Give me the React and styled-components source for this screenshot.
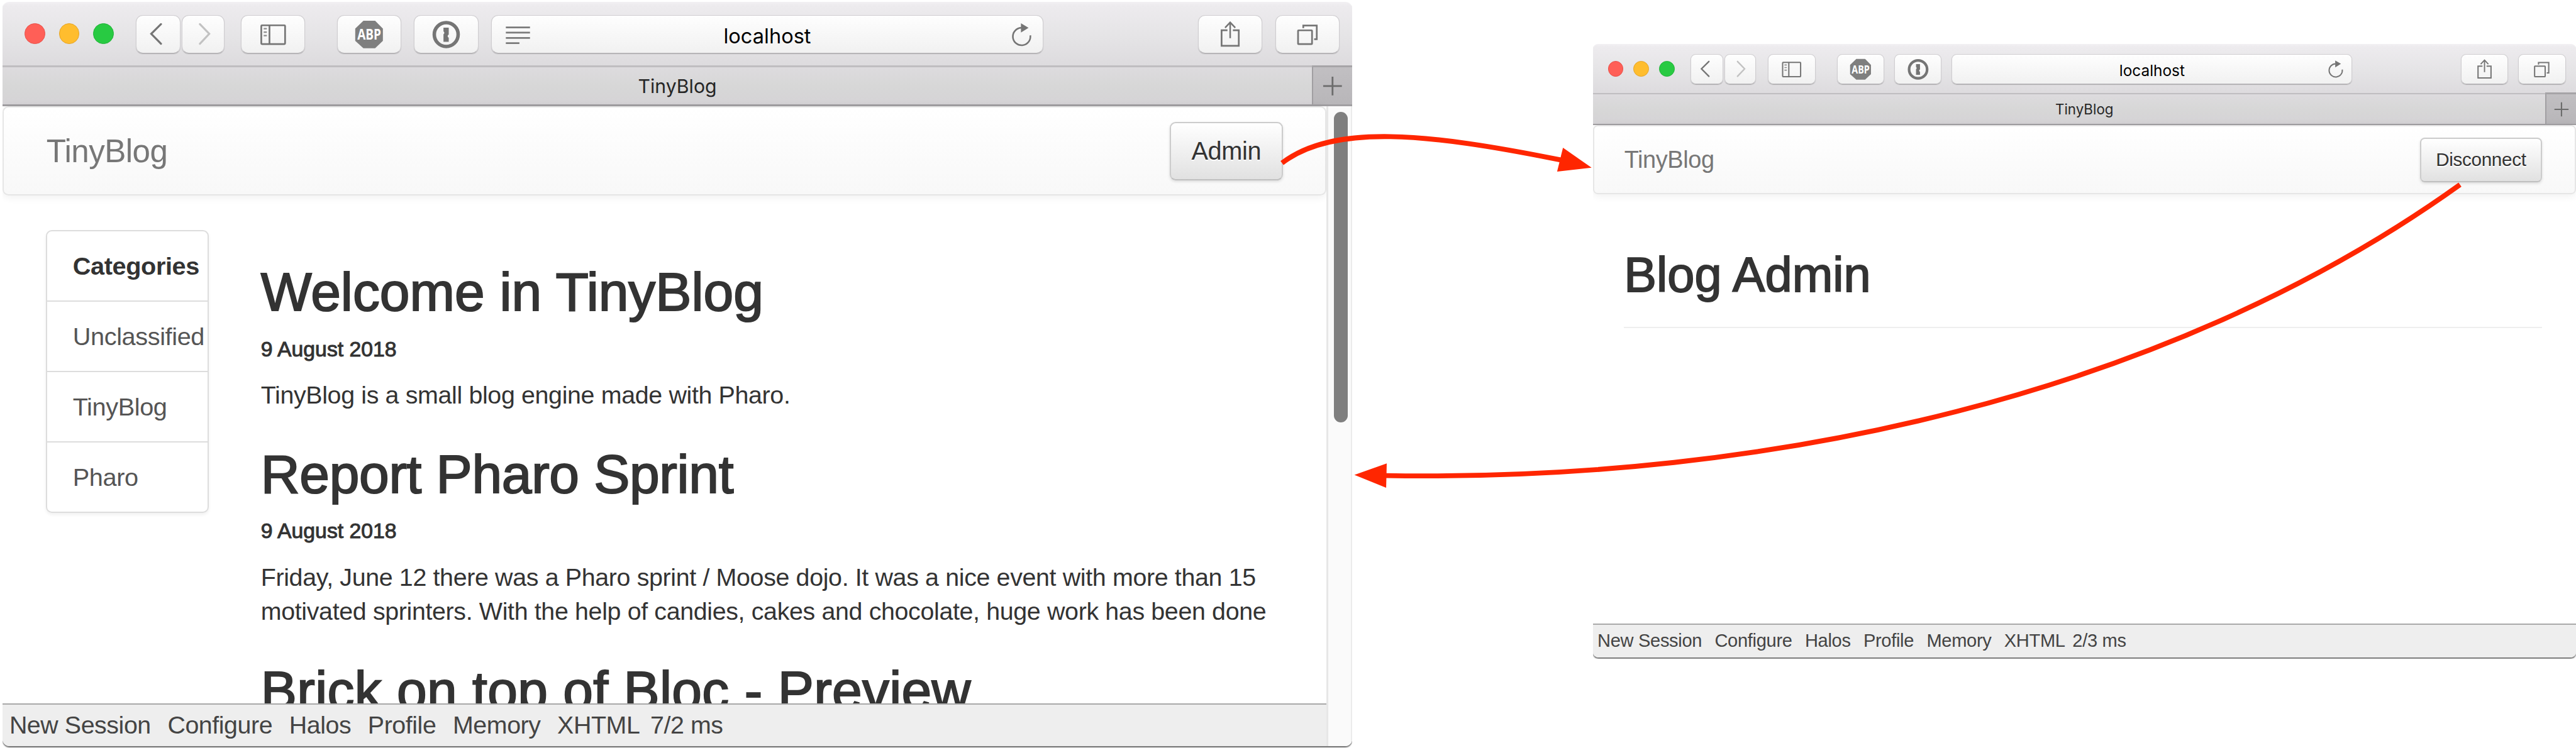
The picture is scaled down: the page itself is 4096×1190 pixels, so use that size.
import React from "react";
import styled, { createGlobalStyle, ThemeProvider } from "styled-components";

/* All measures are design units; u() turns them into screen pixels. */
const SCALE = 4096 / 4404;
const u = (n) => `${(n * SCALE).toFixed(2)}px`;
const t = (key) => ({ theme }) => u(theme[key]);

const sans = `"Liberation Sans", Arial, sans-serif`;
const chromeFont = `Inter, "Liberation Sans", sans-serif`;

const mainTheme = {
  width: 2308, frameHeight: 1276, windowHeight: 1273, radius: 12,
  toolbarHeight: 109, toolbarPadTop: 22.3, toolbarPadLeft: 38, toolbarPadRight: 22,
  light: 35, lightGap: 23.75, lightsEnd: 37.5,
  buttonHeight: 66.4, buttonWidth: 110, backWidth: 76.5, forwardWidth: 73,
  navEnd: 28, sidebarEnd: 54.5, buttonGap: 22, urlWidth: 943.7,
  icon: 1, urlFont: 35, urlShift: 5,
  tabBarHeight: 70, tabFont: 32.5, plusWidth: 69,
  navbarHeight: 152, navbarPadLeft: 73.2, navbarPadRight: 73, brandFont: 53.9,
  actionWidth: 193, actionHeight: 99.5, actionFont: 41.9, navRadius: 10,
  footerHeight: 73, footerFont: 41.5, footerGap: 28.6, footerPadLeft: 12, timeGap: 18,
};

const adminTheme = {
  width: 1681, frameHeight: 1051, windowHeight: 1048.8, radius: 9,
  toolbarHeight: 84, toolbarPadTop: 16.8, toolbarPadLeft: 25.9, toolbarPadRight: 17.6,
  light: 26.7, lightGap: 16.9, lightsEnd: 27.6,
  buttonHeight: 51.6, buttonWidth: 80.9, backWidth: 55.7, forwardWidth: 53.4,
  navEnd: 21.3, sidebarEnd: 36.7, buttonGap: 17.3, urlWidth: 685,
  icon: 0.755, urlFont: 26.2, urlShift: 4,
  tabBarHeight: 54.5, tabFont: 24, plusWidth: 52.5,
  navbarHeight: 118.3, navbarPadLeft: 51.8, navbarPadRight: 55.6, brandFont: 40,
  actionWidth: 209.4, actionHeight: 76.4, actionFont: 31.2, navRadius: 8,
  footerHeight: 57.3, footerFont: 30.65, footerGap: 21.8, footerPadLeft: 8, timeGap: 12.5,
};

const GlobalStyle = createGlobalStyle`
  *, *::before, *::after { box-sizing: border-box; }
  body { margin: 0; background: #fff; }
  h1, h2, p, ul { margin: 0; padding: 0; }
`;

const Stage = styled.main`
  position: relative;
  display: flex;
  align-items: flex-start;
  gap: ${u(411)};
  width: 4096px;
  height: 1190px;
  padding: ${u(3)} 0 0 ${u(4)};
  overflow: hidden;
  background: #fff;
  font-family: ${sans};
  white-space: nowrap;
`;

const Frame = styled.section`
  flex: none;
  width: ${t("width")};
  height: ${t("frameHeight")};
  margin-top: ${({ $drop }) => u($drop || 0)};
  overflow: hidden;
`;

const WindowBox = styled.div`
  display: flex;
  flex-direction: column;
  height: ${t("windowHeight")};
  overflow: hidden;
  background: #fff;
  border-radius: ${t("radius")};
  box-shadow: 0 2px 2px #666;
`;

/* ---------- browser chrome ---------- */

const Toolbar = styled.header`
  flex: none;
  display: flex;
  align-items: flex-start;
  height: ${t("toolbarHeight")};
  padding: ${t("toolbarPadTop")} ${t("toolbarPadRight")} 0 ${t("toolbarPadLeft")};
  background: linear-gradient(#f2f0f3, #edebee 6%, #e5e4e6 55%, #dddbde);
`;

const Lights = styled.div`
  display: flex;
  align-items: center;
  gap: ${t("lightGap")};
  height: ${t("buttonHeight")};
  padding-bottom: ${u(1.5)};
  margin-right: ${t("lightsEnd")};
`;

const Light = styled.span`
  width: ${t("light")};
  height: ${t("light")};
  border: 1px solid ${({ $edge }) => $edge};
  border-radius: 50%;
  background: ${({ $color }) => $color};
`;

const ButtonGroup = styled.div`
  display: flex;
  gap: ${({ $gap, theme }) => u($gap ?? theme.buttonGap)};
  margin-right: ${({ $end, theme }) => u($end ? theme[$end] : 0)};
`;

const raised = `
  background: linear-gradient(#fefefe, #f1f1f1);
  border: 1px solid #d0ced1;
  border-bottom-color: #b9b7ba;
  box-shadow: 0 1px 1px rgba(0, 0, 0, 0.22);
`;

const ToolButton = styled.button`
  flex: none;
  display: flex;
  align-items: center;
  justify-content: center;
  width: ${({ $size = "buttonWidth", theme }) => u(theme[$size])};
  height: ${t("buttonHeight")};
  padding: 0;
  overflow: hidden;
  border-radius: ${({ theme }) => u(12 * theme.icon)};
  ${raised}
`;

const UrlBar = styled.div`
  display: grid;
  grid-template-columns: 1fr auto 1fr;
  align-items: center;
  width: ${t("urlWidth")};
  height: ${t("buttonHeight")};
  margin: 0 auto 0 ${t("buttonGap")};
  border-radius: ${({ theme }) => u(12 * theme.icon)};
  ${raised}
`;

const UrlText = styled.span`
  padding-top: ${t("urlShift")};
  color: #000;
  font: 400 ${t("urlFont")} / 1 ${chromeFont};
`;

const UrlSlot = styled.span`
  display: flex;
  justify-content: ${({ $side }) => $side};
`;

const Glyph = styled.svg`
  flex: none;
  display: block;
  width: ${({ $w, theme }) => u($w * theme.icon)};
  height: ${({ $h = 66, theme }) => u($h * theme.icon)};
  fill: none;
  stroke: ${({ $color = "#757575" }) => $color};
  stroke-width: 2.9;
`;

const TabBar = styled.nav`
  flex: none;
  display: flex;
  height: ${t("tabBarHeight")};
  border-top: ${({ theme }) => (theme.icon === 1 ? 3 : 2)}px solid #bfbdc0;
  border-bottom: ${({ theme }) => (theme.icon === 1 ? 3 : 2)}px solid #a19fa2;
`;

const Tab = styled.div`
  flex: 1;
  display: flex;
  align-items: center;
  justify-content: center;
  padding-left: ${t("plusWidth")};
  background: linear-gradient(#dddbde, #d7d7d7 50%, #d5d3d6);
  color: #262626;
  font: 400 ${t("tabFont")} / 1 ${chromeFont};
`;

const NewTab = styled.div`
  display: flex;
  align-items: center;
  justify-content: center;
  width: ${t("plusWidth")};
  border-left: 2px solid #a19fa2;
  background: linear-gradient(#c1bfc2, #b8b6b9);
  box-shadow: 0 -3px 0 #a6a4a7;
`;

/* ---------- page ---------- */

const Viewport = styled.div`
  flex: 1;
  min-height: 0;
  display: flex;
`;

const Page = styled.div`
  flex: 1;
  min-width: 0;
  display: flex;
  flex-direction: column;
`;

const Navbar = styled.div`
  flex: none;
  display: flex;
  align-items: center;
  justify-content: space-between;
  height: ${t("navbarHeight")};
  padding: ${u(1)} ${t("navbarPadRight")} 0 ${t("navbarPadLeft")};
  background: linear-gradient(#fff, #f8f8f8);
  border: 2px solid #e6e6e6;
  border-radius: ${t("navRadius")};
  box-shadow: 0 2px 14px rgba(0, 0, 0, 0.07);
`;

const Brand = styled.span`
  color: #777;
  font-size: ${({ theme }) => u(theme.brandFont * 1.02)};
  letter-spacing: -0.011em;
  line-height: 1.2;
`;

const ActionButton = styled.button`
  width: ${t("actionWidth")};
  height: ${t("actionHeight")};
  padding: 0;
  border: 2px solid #ccc;
  border-bottom-color: #c0c0c0;
  border-radius: ${t("navRadius")};
  background: linear-gradient(#fff, #e1e1e1);
  box-shadow: 0 2px 4px rgba(0, 0, 0, 0.12);
  color: #333;
  font-family: ${sans};
  font-size: ${({ theme }) => u(theme.actionFont * 1.02)};
  letter-spacing: -0.01em;
  text-shadow: 0 2px 0 #fff;
`;

const Columns = styled.div`
  flex: 1;
  min-height: 0;
  display: flex;
  align-items: flex-start;
  gap: ${u(88.6)};
  padding-left: ${u(74.8)};
  overflow: hidden;
`;

const CategoryList = styled.ul`
  flex: none;
  display: flex;
  flex-direction: column;
  width: ${u(278.6)};
  height: ${u(483.8)};
  margin-top: ${u(59.8)};
  border: 2px solid #ddd;
  border-radius: ${u(10)};
  box-shadow: 0 3px 5px rgba(0, 0, 0, 0.06);
  list-style: none;
`;

const Category = styled.li`
  flex: 1;
  display: flex;
  align-items: center;
  padding-left: ${u(43.5)};
  color: ${({ $head }) => ($head ? "#333" : "#555")};
  font-size: ${u(42.7)};
  font-weight: ${({ $head }) => ($head ? 700 : 400)};
  letter-spacing: -0.01em;

  & + & { border-top: 2px solid #ddd; }
`;

const Posts = styled.div`
  padding-top: ${u(115.6)};
  color: #333;
`;

const Post = styled.article`
  margin-bottom: ${u(55.6)};
`;

const PostTitle = styled.h1`
  font-size: ${u(92.2)};
  font-weight: 400;
  letter-spacing: ${({ $tracking = 0 }) => `${$tracking}em`};
  line-height: ${u(100)};
  -webkit-text-stroke: 0.024em #333;
`;

const PostDate = styled.h2`
  margin: ${u(19)} 0 ${u(19.8)};
  font-size: ${u(36.3)};
  font-weight: 400;
  line-height: ${u(58)};
  -webkit-text-stroke: 0.03em #333;
`;

const PostText = styled.p`
  font-size: ${u(42.4)};
  letter-spacing: -0.0095em;
  line-height: ${u(58.9)};
  white-space: pre-line;
`;

const AdminBody = styled.div`
  flex: 1;
  padding: ${u(93.2)} ${u(57.6)} 0 ${u(53.5)};
`;

const AdminTitle = styled.h1`
  padding-bottom: ${u(43.3)};
  border-bottom: 2px solid #eee;
  color: #333;
  font-size: ${u(83.4)};
  font-weight: 400;
  line-height: ${u(90)};
  -webkit-text-stroke: 0.024em #333;
`;

const Footer = styled.footer`
  flex: none;
  display: flex;
  align-items: center;
  gap: ${t("footerGap")};
  height: ${t("footerHeight")};
  padding: 0 0 ${u(1.5)} ${t("footerPadLeft")};
  border-top: 2px solid #a9a9a9;
  background: #eee;
  color: #444;
  font-size: ${({ theme }) => u(theme.footerFont * 1.02)};
  letter-spacing: -0.011em;
`;

const FooterTime = styled.span`
  margin-left: ${({ theme }) => u(theme.timeGap - theme.footerGap)};
`;

const Scrollbar = styled.div`
  flex: none;
  width: ${u(44)};
  padding: ${u(9)} 0 0 ${u(9.5)};
  border-left: 3px solid #e7e7e7;
  border-right: 2px solid #ebebeb;
  background: #fafafa;
`;

const Thumb = styled.div`
  width: ${u(23)};
  height: ${u(532)};
  border-radius: ${u(12)};
  background: #7f7f7f;
`;

const Arrows = styled.svg`
  position: absolute;
  inset: 0;
  width: 4096px;
  height: 1190px;
  pointer-events: none;
`;

/* ---------- icons ---------- */

const BackIcon = () => (
  <Glyph $w={76.5} viewBox="0 0 76.5 66">
    <path d="M43 15.4L26.3 32L43 49" strokeWidth="3.4" strokeLinecap="round" />
  </Glyph>
);

const ForwardIcon = () => (
  <Glyph $w={73} $color="#c2c2c2" viewBox="0 0 73 66">
    <path d="M31 15.4L47 32L31 49" strokeWidth="3.4" strokeLinecap="round" />
  </Glyph>
);

const SidebarIcon = () => (
  <Glyph $w={110} viewBox="0 0 110 66">
    <rect x="34.9" y="17.5" width="40.7" height="32.2" rx="1.2" />
    <path d="M48.9 17V50" />
    <path d="M39 23.2h5.4M39 29.2h5.4M39 35.2h5.4" stroke="#8c8c8c" strokeWidth="2.4" />
  </Glyph>
);

const AdblockIcon = () => (
  <Glyph $w={110} viewBox="0 0 110 66">
    <path d="M45 9.7H65L78.3 23V44L65 56.7H45L31 44V23Z" fill="#7f7f7f" stroke="none" />
    <text
      x="34.6" y="42.4" fill="#fff" stroke="none" textLength="40.6" lengthAdjust="spacingAndGlyphs"
      fontFamily="'Open Sans', 'Noto Sans', sans-serif" fontWeight="700" fontSize="24.2"
    >ABP</text>
  </Glyph>
);

const PasswordIcon = () => (
  <Glyph $w={110} viewBox="0 0 110 66">
    <circle cx="55.4" cy="33.3" r="20.4" strokeWidth="6" />
    <path
      d="M50.7 21.4H59.7V33.4A2.9 2.9 0 0 0 59.7 38.8V45.7H50.7V32.8A2.7 2.7 0 0 0 50.7 28Z"
      fill="#757575" stroke="none"
    />
  </Glyph>
);

const ReaderIcon = () => (
  <Glyph $w={70} viewBox="0 0 70 66">
    <path d="M24 20H65.3M24 29H65.3M24 38H65.3M24 46.9H47.2" stroke="#7b7b7b" />
  </Glyph>
);

const ReloadIcon = () => (
  <Glyph $w={60} viewBox="0 0 60 66">
    <path d="M39 33.6A15 15 0 1 1 23.5 20.6" strokeWidth="2.8" />
    <path d="M23 13L36 20.7L23 28.7Z" fill="#757575" stroke="none" />
  </Glyph>
);

const ShareIcon = () => (
  <Glyph $w={110} viewBox="0 0 110 66">
    <path d="M50.3 26H40.2V52.6H69.6V26H59.5" />
    <path d="M54.9 12.6V39.6M46.2 21.6L54.9 12.4L63.6 21.6" strokeWidth="2.7" />
  </Glyph>
);

const TabsIcon = () => (
  <Glyph $w={110} viewBox="0 0 110 66">
    <rect x="38.7" y="26.1" width="23.9" height="23.6" rx="0.8" />
    <path d="M47.6 22.4V17.9H70.7V41.2H66.2" />
  </Glyph>
);

const PlusIcon = () => (
  <Glyph $w={34} $h={34} $color="#6c6c6c" viewBox="0 0 34 34">
    <path d="M17 1V33M1 17H33" strokeWidth="3" />
  </Glyph>
);

/* ---------- composed parts ---------- */

function BrowserWindow({ theme, drop, reader, children }) {
  return (
    <ThemeProvider theme={theme}>
      <Frame $drop={drop}>
        <WindowBox>
          <Toolbar>
            <Lights>
              <Light $color="#ff5f57" $edge="#e8524b" />
              <Light $color="#ffbd2e" $edge="#e5a52a" />
              <Light $color="#28ca42" $edge="#24b33a" />
            </Lights>
            <ButtonGroup $gap={2} $end="navEnd">
              <ToolButton $size="backWidth"><BackIcon /></ToolButton>
              <ToolButton $size="forwardWidth"><ForwardIcon /></ToolButton>
            </ButtonGroup>
            <ButtonGroup $end="sidebarEnd">
              <ToolButton><SidebarIcon /></ToolButton>
            </ButtonGroup>
            <ButtonGroup>
              <ToolButton><AdblockIcon /></ToolButton>
              <ToolButton><PasswordIcon /></ToolButton>
            </ButtonGroup>
            <UrlBar>
              <UrlSlot $side="flex-start">{reader && <ReaderIcon />}</UrlSlot>
              <UrlText>localhost</UrlText>
              <UrlSlot $side="flex-end"><ReloadIcon /></UrlSlot>
            </UrlBar>
            <ButtonGroup>
              <ToolButton><ShareIcon /></ToolButton>
              <ToolButton><TabsIcon /></ToolButton>
            </ButtonGroup>
          </Toolbar>
          <TabBar>
            <Tab>TinyBlog</Tab>
            <NewTab><PlusIcon /></NewTab>
          </TabBar>
          <Viewport>{children}</Viewport>
        </WindowBox>
      </Frame>
    </ThemeProvider>
  );
}

const SiteNavbar = ({ action }) => (
  <Navbar>
    <Brand>TinyBlog</Brand>
    <ActionButton>{action}</ActionButton>
  </Navbar>
);

const tools = ["New Session", "Configure", "Halos", "Profile", "Memory", "XHTML"];

const DevToolbar = ({ time }) => (
  <Footer>
    {tools.map((name) => <span key={name}>{name}</span>)}
    <FooterTime>{time}</FooterTime>
  </Footer>
);

const categories = ["Unclassified", "TinyBlog", "Pharo"];

const posts = [
  {
    title: "Welcome in TinyBlog",
    date: "9 August 2018",
    text: "TinyBlog is a small blog engine made with Pharo.",
  },
  {
    title: "Report Pharo Sprint",
    tracking: -0.004,
    date: "9 August 2018",
    text:
      "Friday, June 12 there was a Pharo sprint / Moose dojo. It was a nice event with more than 15\n" +
      "motivated sprinters. With the help of candies, cakes and chocolate, huge work has been done",
  },
  { title: "Brick on top of Bloc - Preview", tracking: 0.0035 },
];

export default function App() {
  return (
    <Stage>
      <GlobalStyle />
      <BrowserWindow theme={mainTheme} reader>
        <Page>
          <SiteNavbar action="Admin" />
          <Columns>
            <CategoryList>
              <Category $head>Categories</Category>
              {categories.map((name) => <Category key={name}>{name}</Category>)}
            </CategoryList>
            <Posts>
              {posts.map(({ title, tracking, date, text }) => (
                <Post key={title}>
                  <PostTitle $tracking={tracking}>{title}</PostTitle>
                  {date && <PostDate>{date}</PostDate>}
                  {text && <PostText>{text}</PostText>}
                </Post>
              ))}
            </Posts>
          </Columns>
          <DevToolbar time="7/2 ms" />
        </Page>
        <Scrollbar><Thumb /></Scrollbar>
      </BrowserWindow>
      <BrowserWindow theme={adminTheme} drop={72.5}>
        <Page>
          <SiteNavbar action="Disconnect" />
          <AdminBody>
            <AdminTitle>Blog Admin</AdminTitle>
          </AdminBody>
          <DevToolbar time="2/3 ms" />
        </Page>
      </BrowserWindow>
      <Arrows viewBox="0 0 4404 1279" preserveAspectRatio="none" fill="none" stroke="#ff2600" strokeWidth="8.5">
        <path d="M2191.8 278.7C2280 211.5 2440 227.5 2668 273.5" />
        <path d="M2721 286.7L2672.1 252.7L2662.1 293.3Z" fill="#ff2600" stroke="none" />
        <path d="M4205.7 315.8C3705 675 3025 824.5 2368 813.2" />
        <path d="M2315.5 812L2370.8 792.5L2369.8 834Z" fill="#ff2600" stroke="none" />
      </Arrows>
    </Stage>
  );
}
